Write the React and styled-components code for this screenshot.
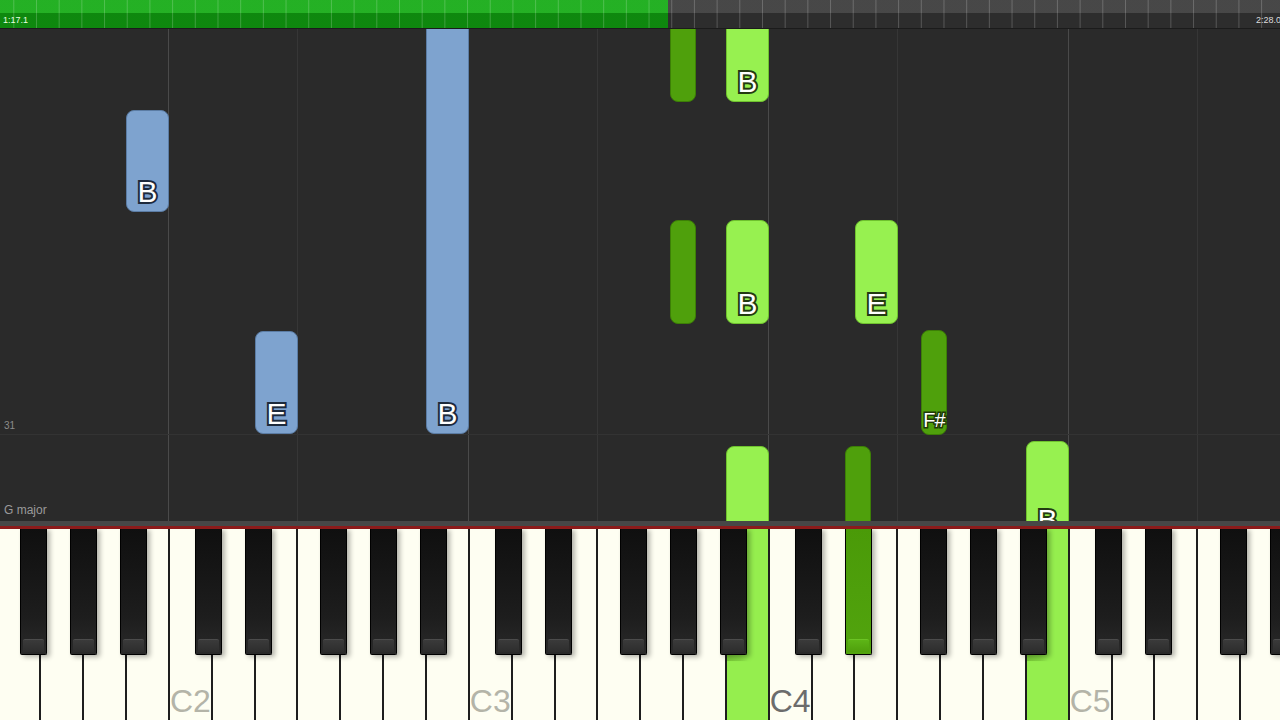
import React from 'react';
import styled, { createGlobalStyle } from 'styled-components';

const WHITE_W = 300 / 7;
const KEY_START = -2.43;

const GlobalStyle = createGlobalStyle`
  html, body {
    margin: 0;
    padding: 0;
    background: #2a2a2a;
  }
  body {
    font-family: "Liberation Sans", Arial, sans-serif;
  }
`;

const Screen = styled.div`
  width: 1280px;
  height: 720px;
  display: flex;
  flex-direction: column;
  overflow: hidden;
  background: #2a2a2a;
`;

const TopBar = styled.div`
  height: 29px;
  flex: none;
  display: flex;
  align-items: flex-end;
  justify-content: space-between;
  padding: 0 0 3px 3px;
  box-sizing: border-box;
  border-bottom: 1px solid #1b1b1b;
  background-image:
    linear-gradient(to right, rgba(255, 255, 255, 0.2) 1px, transparent 1px),
    linear-gradient(to bottom, rgba(255, 255, 255, 0.08) 0 13px, transparent 13px),
    linear-gradient(to bottom, transparent 0 13px, rgba(0, 0, 0, 0.2) 13px),
    linear-gradient(to right, #12aa12 ${p => p.$progress}px, #383838 ${p => p.$progress}px);
  background-size: 22.7px 100%, 100% 100%, 100% 100%, 100% 100%;
  background-position: 13.3px 0, 0 0, 0 0, 0 0;
  background-repeat: repeat-x, no-repeat, no-repeat, no-repeat;
`;

const TimeText = styled.span`
  font-size: 9px;
  line-height: 10px;
  color: ${p => (p.$muted ? '#dcdcdc' : '#e6ffe0')};
  white-space: nowrap;
  margin-right: ${p => (p.$muted ? '-1px' : '0')};
`;

const Roll = styled.div`
  flex: 1;
  position: relative;
  overflow: hidden;
  display: flex;
  flex-direction: column;
  justify-content: flex-end;
  padding: 0 0 4px 4px;
  background-color: #2a2a2a;
  background-image:
    linear-gradient(to right, #4a4a4a 1px, transparent 1px),
    linear-gradient(to right, #363636 1px, transparent 1px);
  background-size: 300px 100%, 300px 100%;
  background-position: 168px 0, 297px 0;
`;

const MeasureLine = styled.div`
  position: absolute;
  left: 0;
  right: 0;
  top: 405px;
  height: 1px;
  background: #333;
`;

const MeasureNumber = styled.span`
  position: absolute;
  left: 4px;
  bottom: 4px;
  font-size: 10px;
  color: #8c8c8c;
`;

const KeyName = styled.span`
  font-size: 12px;
  color: #9a9a9a;
`;

const NOTE_COLORS = {
  blue: { fill: '#7ea3cf', edge: '#5b7ca4', stroke: '#1d2a3c' },
  light: { fill: '#97f150', edge: '#6fc22e', stroke: '#233a12' },
  dark: { fill: '#4fa00c', edge: '#3c7f06', stroke: '#1f3a08' },
};

const Note = styled.div`
  position: absolute;
  box-sizing: border-box;
  border-radius: 8px;
  display: flex;
  flex-direction: column;
  justify-content: flex-end;
  align-items: center;
  background: ${p => NOTE_COLORS[p.$kind].fill};
  border: 1px solid ${p => NOTE_COLORS[p.$kind].edge};
`;

const NoteLabel = styled.span`
  font-size: ${p => (p.$small ? '20px' : '30px')};
  line-height: 1;
  padding-bottom: 4px;
  color: #fff;
  -webkit-text-stroke: ${p => (p.$small ? '3px' : '4px')} ${p => NOTE_COLORS[p.$kind].stroke};
  paint-order: stroke fill;
  letter-spacing: ${p => (p.$small ? '-1px' : '0')};
`;

const Rim = styled.div`
  flex: none;
  height: 5px;
  background: #474747;
  border-top: 1px solid #3a3a3a;
  border-bottom: 3px solid #8c1b1b;
  box-sizing: content-box;
  margin-top: -1px;
`;

const Keyboard = styled.div`
  flex: none;
  height: 191px;
  position: relative;
  overflow: hidden;
  background: #fefef2;
`;

const WhiteRow = styled.div`
  display: flex;
  height: 100%;
  margin-left: ${KEY_START}px;
`;

const WhiteKey = styled.div`
  flex: 0 0 ${WHITE_W}px;
  box-sizing: border-box;
  display: flex;
  align-items: flex-end;
  justify-content: center;
  box-shadow: inset -1px 0 0 #1e1e1e, inset 1px 0 0 #1e1e1e;
  background: ${p =>
    p.$pressed
      ? 'linear-gradient(to right, rgba(60, 120, 10, 0.35) 0, rgba(60, 120, 10, 0.2) 14px, transparent 22px) 0 0 / 100% 132px no-repeat, #95ee4e'
      : '#fefef2'};
`;

const OctaveLabel = styled.span`
  font-size: 32px;
  line-height: 1;
  margin-bottom: 3px;
  color: ${p => (p.$current ? '#6c6c6c' : '#b4b4a8')};
`;

const BlackKey = styled.div`
  position: absolute;
  top: -1px;
  width: 27px;
  height: 127px;
  box-sizing: border-box;
  border: 1px solid #000;
  border-top: none;
  border-radius: 0 0 2px 2px;
  background: ${p =>
    p.$pressed
      ? 'linear-gradient(to bottom, #4a9a08 0%, #52a40e 100%)'
      : 'linear-gradient(to bottom, #0f0f0f 0%, #1d1d1d 70%, #2a2a2a 100%)'};
  box-shadow: 3px 2px 5px rgba(0, 0, 0, 0.3);

  &::after {
    content: '';
    position: absolute;
    left: 2px;
    right: 2px;
    bottom: 2px;
    height: 12px;
    border-radius: 2px 2px 0 0;
    border-top: 1px solid ${p => (p.$pressed ? '#6cc424' : '#4c4c4c')};
    background: ${p =>
      p.$pressed
        ? 'linear-gradient(#5db516, #4f9f0c)'
        : 'linear-gradient(#3a3a3a, #2d2d2d)'};
  }
`;

const ROLL_TOP = 30;

const notes = [
  { kind: 'blue', x: 126, w: 43, y1: 111, y2: 213, label: 'B' },
  { kind: 'blue', x: 255, w: 43, y1: 332, y2: 435, label: 'E' },
  { kind: 'blue', x: 426, w: 43, y1: 10, y2: 435, label: 'B' },
  { kind: 'dark', x: 670, w: 26, y1: 10, y2: 103 },
  { kind: 'light', x: 726, w: 43, y1: 10, y2: 103, label: 'B' },
  { kind: 'dark', x: 670, w: 26, y1: 221, y2: 325 },
  { kind: 'light', x: 726, w: 43, y1: 221, y2: 325, label: 'B' },
  { kind: 'light', x: 855, w: 43, y1: 221, y2: 325, label: 'E' },
  { kind: 'dark', x: 921, w: 26, y1: 331, y2: 436, label: 'F#', small: true },
  { kind: 'light', x: 726, w: 43, y1: 447, y2: 560 },
  { kind: 'dark', x: 845, w: 26, y1: 447, y2: 560 },
  { kind: 'light', x: 1026, w: 43, y1: 442, y2: 541, label: 'B' },
];

const WHITE_NAMES = ['F', 'G', 'A', 'B', 'C', 'D', 'E'];
const whiteKeys = Array.from({ length: 31 }, (_, i) => {
  const name = WHITE_NAMES[i % 7];
  const octave = 1 + Math.floor((i + 3) / 7);
  return { id: i, name, octave };
});
const pressedWhite = new Set([17, 24]);

const BLACK_OFFSETS = [39, 89, 164, 214, 264];
const blackKeys = [];
for (let oct = 1; oct <= 5; oct++) {
  const c = 169 + (oct - 2) * 300;
  BLACK_OFFSETS.forEach((off, j) => {
    const center = c + off;
    if (center > -20 && center < 1300) {
      blackKeys.push({ id: `${oct}-${j}`, left: center - 13.5, pressed: oct === 4 && j === 1 });
    }
  });
}

export default function App() {
  return (
    <Screen>
      <GlobalStyle />
      <TopBar $progress={668}>
        <TimeText>1:17.1</TimeText>
        <TimeText $muted>2:28.0</TimeText>
      </TopBar>

      <Roll>
        <MeasureLine>
          <MeasureNumber>31</MeasureNumber>
        </MeasureLine>
        {notes.map((n, i) => (
          <Note
            key={i}
            $kind={n.kind}
            style={{ left: n.x, top: n.y1 - ROLL_TOP, width: n.w, height: n.y2 - n.y1 }}
          >
            {n.label && (
              <NoteLabel $kind={n.kind} $small={n.small}>
                {n.label}
              </NoteLabel>
            )}
          </Note>
        ))}
        <KeyName>G major</KeyName>
      </Roll>

      <Rim />

      <Keyboard>
        <WhiteRow>
          {whiteKeys.map(k => (
            <WhiteKey key={k.id} $pressed={pressedWhite.has(k.id)}>
              {k.name === 'C' && k.octave >= 2 && (
                <OctaveLabel $current={k.octave === 4}>C{k.octave}</OctaveLabel>
              )}
            </WhiteKey>
          ))}
        </WhiteRow>
        {blackKeys.map(b => (
          <BlackKey key={b.id} $pressed={b.pressed} style={{ left: b.left }} />
        ))}
      </Keyboard>
    </Screen>
  );
}
